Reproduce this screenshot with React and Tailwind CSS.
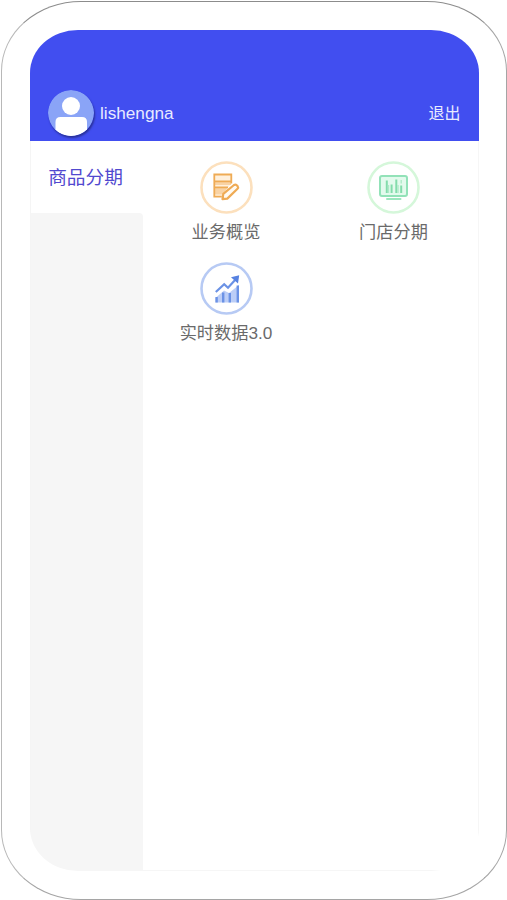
import React from 'react'

const ReportIcon = () => (
  <svg className="w-[53px] h-[53px]" viewBox="0 0 53 53" fill="none">
    <circle cx="26.5" cy="26.5" r="25" stroke="#fce0bd" strokeWidth="2.6" />
    <path d="M14.5 13.5H31V23l-8 9.5v3H14.5z" fill="#fff0dc" />
    <path d="M15 21h16v3H15zM15 27h12.5l-5 6.5H15z" fill="#f9d3a4" />
    <path d="M31.3 22.5V13.5H14.3V35.7h7.5M14.3 20.3h17M14.3 26.3H28" stroke="#efab55" strokeWidth="1.8" />
    <path d="M23.3 32.8L34 24q1.5-1 2.7.2l1 1.1q1 1.3-.2 2.5L27.3 37.600l-4.8.6z" fill="#fffaf2" stroke="#efab55" strokeWidth="2.2" strokeLinejoin="round" />
  </svg>
)

const StoreIcon = () => (
  <svg className="w-[53px] h-[53px]" viewBox="0 0 53 53" fill="none">
    <circle cx="26.5" cy="26.5" r="25" stroke="#d5f7da" strokeWidth="2.6" />
    <rect x="13" y="15" width="27" height="20" rx="2" fill="#e3faed" stroke="#92e2b8" strokeWidth="2" />
    <path d="M19.8 19.5V32M29.3 18.5V32" stroke="#83dcab" strokeWidth="2" />
    <path d="M24.6 23.5V32M34.2 24.5V32" stroke="#83dcab" strokeWidth="2" />
    <path d="M21.5 24v8M31 24v8M34.2 19v3.5" stroke="#aeeac8" strokeWidth="1.4" />
    <path d="M20 38h13.5" stroke="#9ce6be" strokeWidth="2" strokeLinecap="round" />
  </svg>
)

const TrendIcon = () => (
  <svg className="w-[53px] h-[53px]" viewBox="0 0 53 53" fill="none">
    <circle cx="26.5" cy="26.5" r="25" stroke="#b7caf4" strokeWidth="2.6" />
    <path d="M15.5 36l8.5-7.5 5 2.5L39 23v17.5H15.5z" fill="#bccef7" />
    <path d="M16.6 35v5.5M23.2 30.5v10M29.8 31v9.5M37.8 23.5v17" stroke="#6b92e5" strokeWidth="2.4" />
    <path d="M15.8 30l8.4-7.8 3.8 3.5 8.2-9" stroke="#6b92e5" strokeWidth="2.2" />
    <path d="M31 15.2l8.2-2-1.2 8.3z" fill="#5782e1" />
  </svg>
)

const menus = [
  { name: '业务概览', icon: <ReportIcon /> },
  { name: '门店分期', icon: <StoreIcon /> },
  { name: '实时数据3.0', icon: <TrendIcon /> },
]

const Avatar = () => (
  <svg className="w-[46px] h-[46px] rounded-full shadow-[1px_2px_2px_#2a329a]" viewBox="0 0 46 46">
    <circle cx="23" cy="23" r="23" fill="#8aa4f7" />
    <circle cx="23" cy="16" r="9" fill="#fff" />
    <path d="M7.5 40V32q0-5 5-5h21.5q5 0 5 5v8A23 23 0 0 1 7.5 40z" fill="#fff" />
  </svg>
)

const App = () => {
  return (
    <div className="w-[507px] h-[900px] pt-px pl-px bg-white overflow-hidden font-['Liberation_Sans','Noto_Sans_CJK_SC',sans-serif]">
      <div className="w-full h-full pl-[27.5px] pr-[27.5px] pt-[28px] pb-[28.5px] bg-white border border-t-[#8c8c8c] border-r-[#a5a5a5] border-b-[#a5a5a5] border-l-[#b8b8b8] rounded-[80px/70px]">
        <div className="w-full h-full flex flex-col overflow-hidden rounded-[48px/43px]">
          <header className="h-[111px] shrink-0 flex items-end justify-between bg-[#414ef0] text-[#e8eaff] pl-[18px] pr-[18px] pb-[5px]">
            <div className="flex items-center gap-[6.5px]">
              <Avatar />
              <span className="text-[17.2px] leading-[24px]">lishengna</span>
            </div>
            <button className="text-base leading-[24px] mb-[10px]">退出</button>
          </header>
          <div className="flex-1 flex">
            <aside className="w-[113px] shrink-0 flex flex-col border-l border-[#f5f5f5]">
              <div className="h-[72px] flex items-center justify-center pt-[3px] pr-[2px] text-[18.7px] text-[#5149cf]">
                商品分期
              </div>
              <div className="flex-1 bg-[#f6f6f6] rounded-tr-[4px]"></div>
            </aside>
            <main className="flex-1 min-w-0 grid grid-cols-[167px_1fr] content-start pt-[20px] border-r border-b border-[#f6f6f6]">
              {menus.map((item) => (
                <div key={item.name} className="h-[101px] flex flex-col items-center">
                  {item.icon}
                  <span className="mt-[5.5px] text-[17.2px] leading-[24px] text-[#6a6a6a]">{item.name}</span>
                </div>
              ))}
            </main>
          </div>
        </div>
      </div>
    </div>
  )
}

export default App
